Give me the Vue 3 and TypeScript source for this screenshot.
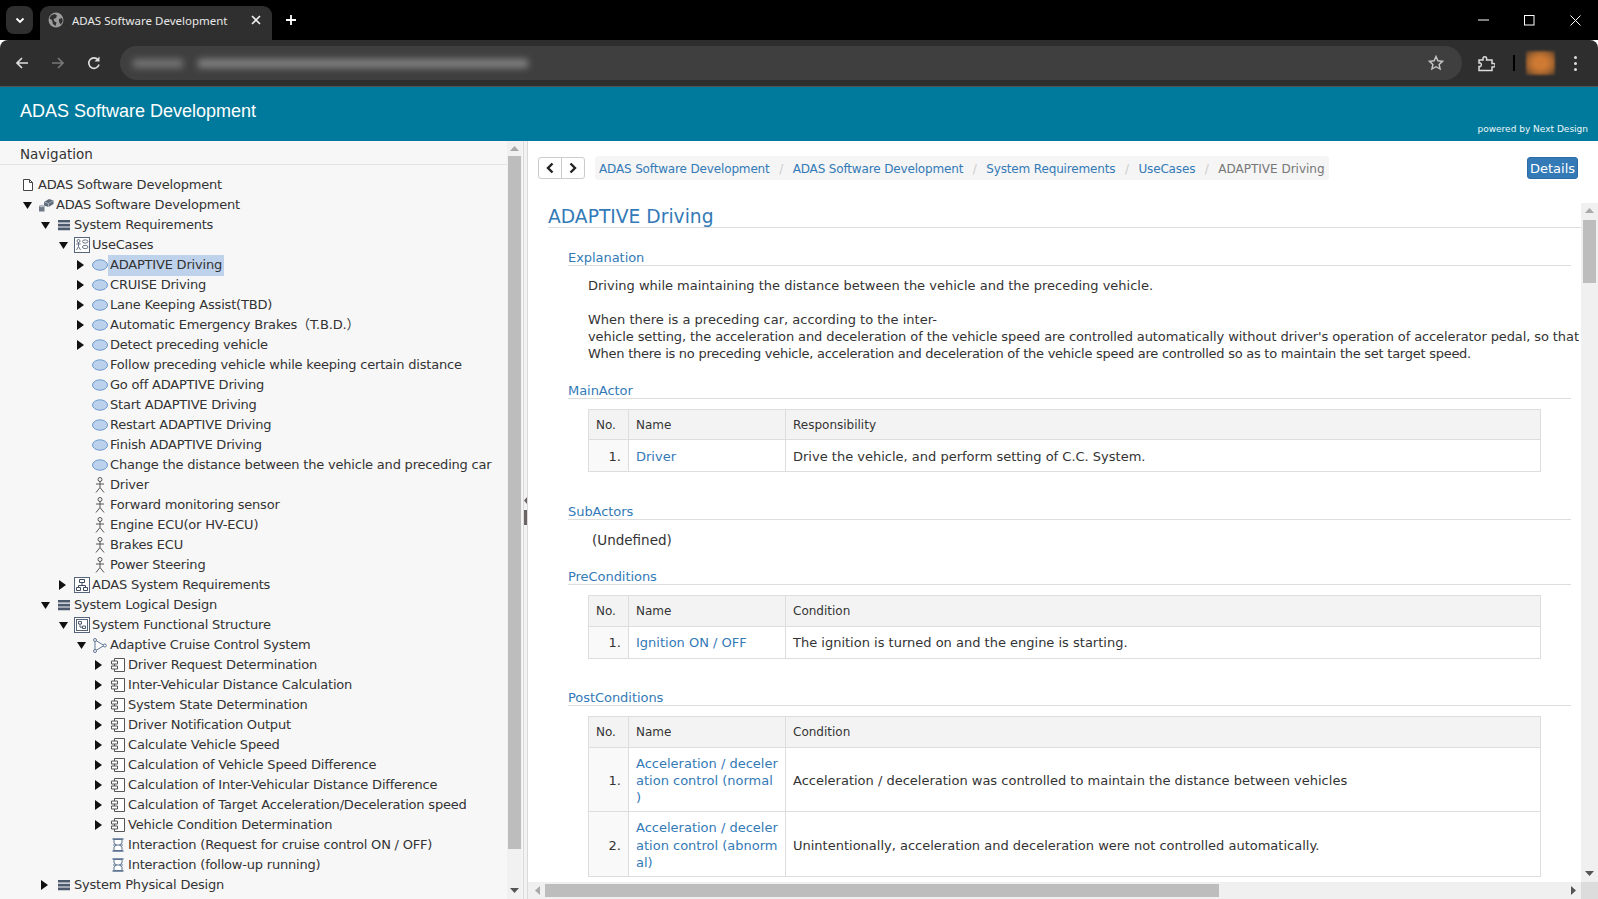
<script setup lang="ts">
type Row = { l: number; a: 'o' | 'c' | 'n'; i: string; t: string; s?: boolean }
const r = (l: number, a: 'o' | 'c' | 'n', i: string, t: string, s = false): Row => ({ l, a, i, t, s })
const rows: Row[] = [
  r(0, 'n', 'doc', 'ADAS Software Development'),
  r(1, 'o', 'model', 'ADAS Software Development'),
  r(2, 'o', 'list', 'System Requirements'),
  r(3, 'o', 'uc', 'UseCases'),
  r(4, 'c', 'ell', 'ADAPTIVE Driving', true),
  r(4, 'c', 'ell', 'CRUISE Driving'),
  r(4, 'c', 'ell', 'Lane Keeping Assist(TBD)'),
  r(4, 'c', 'ell', 'Automatic Emergency Brakes（T.B.D.）'),
  r(4, 'c', 'ell', 'Detect preceding vehicle'),
  r(4, 'n', 'ell', 'Follow preceding vehicle while keeping certain distance'),
  r(4, 'n', 'ell', 'Go off ADAPTIVE Driving'),
  r(4, 'n', 'ell', 'Start ADAPTIVE Driving'),
  r(4, 'n', 'ell', 'Restart ADAPTIVE Driving'),
  r(4, 'n', 'ell', 'Finish ADAPTIVE Driving'),
  r(4, 'n', 'ell', 'Change the distance between the vehicle and preceding car'),
  r(4, 'n', 'actor', 'Driver'),
  r(4, 'n', 'actor', 'Forward monitoring sensor'),
  r(4, 'n', 'actor', 'Engine ECU(or HV-ECU)'),
  r(4, 'n', 'actor', 'Brakes ECU'),
  r(4, 'n', 'actor', 'Power Steering'),
  r(3, 'c', 'req', 'ADAS System Requirements'),
  r(2, 'o', 'list', 'System Logical Design'),
  r(3, 'o', 'func', 'System Functional Structure'),
  r(4, 'o', 'sys', 'Adaptive Cruise Control System'),
  r(5, 'c', 'comp', 'Driver Request Determination'),
  r(5, 'c', 'comp', 'Inter-Vehicular Distance Calculation'),
  r(5, 'c', 'comp', 'System State Determination'),
  r(5, 'c', 'comp', 'Driver Notification Output'),
  r(5, 'c', 'comp', 'Calculate Vehicle Speed'),
  r(5, 'c', 'comp', 'Calculation of Vehicle Speed Difference'),
  r(5, 'c', 'comp', 'Calculation of Inter-Vehicular Distance Difference'),
  r(5, 'c', 'comp', 'Calculation of Target Acceleration/Deceleration speed'),
  r(5, 'c', 'comp', 'Vehicle Condition Determination'),
  r(5, 'n', 'inter', 'Interaction (Request for cruise control ON / OFF)'),
  r(5, 'n', 'inter', 'Interaction (follow-up running)'),
  r(2, 'c', 'list', 'System Physical Design'),
]
const pad = (x: Row) => (x.l === 0 ? 20 : 20 + 18 * (x.l - 1)) + 'px'
const crumbs = ['ADAS Software Development', 'ADAS Software Development', 'System Requirements', 'UseCases']
const urlBars = [{ w: 50, o: 0.4 }, { w: 330, o: 0.5 }]
</script>

<template>
  <div class="root">
    <div class="tabstrip">
      <div class="tabsearch">
        <svg width="12" height="12" viewBox="0 0 12 12"><path d="M2.500 4.500 6 8l3.500-3.500" fill="none" stroke="#fff" stroke-width="1.800" /></svg>
      </div>
      <div class="tab">
        <svg width="16" height="16" viewBox="0 0 16 16"><circle cx="8" cy="8" r="7.500" fill="#9a9a9a" /><path d="M3 3.500 6.500 2 9 3.500 8 6 5.500 7l1 2.500 2 1-1 3.500L5 12 4 8 1.500 6.500ZM11 7l3-1 .8 3-2 3.500L11 10Z" fill="#2f2f2f" /></svg>
        <span class="tabtitle">ADAS Software Development</span>
        <svg width="10" height="10" viewBox="0 0 10 10"><path d="M1 1l8 8M9 1 1 9" stroke="#eee" stroke-width="1.600" /></svg>
      </div>
      <svg class="plus" width="12" height="12" viewBox="0 0 12 12"><path d="M6 1v10M1 6h10" stroke="#fff" stroke-width="1.800" /></svg>
      <div class="spacer"></div>
      <div class="winctl">
        <svg width="11" height="11" viewBox="0 0 11 11"><path d="M0 5h11" stroke="#fff" stroke-width="1" /></svg>
        <svg width="11" height="11" viewBox="0 0 11 11"><rect x=".5" y=".5" width="9.500" height="9.500" fill="none" stroke="#fff" /></svg>
        <svg width="11" height="11" viewBox="0 0 11 11"><path d="M.5.5l10 10M10.500.5l-10 10" stroke="#fff" /></svg>
      </div>
    </div>
    <div class="toolbar">
      <svg class="nav1" width="16" height="16" viewBox="0 0 16 16"><path d="M14 8H3M8 3 3 8l5 5" fill="none" stroke="#dedede" stroke-width="1.700" /></svg>
      <svg class="nav2" width="16" height="16" viewBox="0 0 16 16"><path d="M2 8h11M8 3l5 5-5 5" fill="none" stroke="#777" stroke-width="1.700" /></svg>
      <svg class="nav3" width="16" height="16" viewBox="0 0 16 16"><path d="M13 9.500A5.200 5.200 0 1 1 12 4.800" fill="none" stroke="#dedede" stroke-width="1.600" /><path d="M13.500 1.500v5h-5z" fill="#dedede" /></svg>
      <div class="urlbar">
        <div class="blurs">
          <i v-for="(b, k) in urlBars" :key="k" :style="{ width: b.w + 'px', opacity: b.o }"></i>
        </div>
        <svg width="16" height="16" viewBox="0 0 16 16" class="star"><path d="M8 1.500l1.900 4.300 4.600.5-3.400 3.100 1 4.600L8 11.700l-4.100 2.300 1-4.600L1.500 6.300l4.600-.5Z" fill="none" stroke="#c8c8c8" stroke-width="1.400" /></svg>
      </div>
      <svg class="ext" width="17" height="17" viewBox="0 0 17 17"><path d="M1 5h4V3.500a1.800 1.800 0 0 1 3.600 0V5h5.400v3.500h1.500a1.700 1.700 0 0 1 0 3.400H14V15.500H1v-4h1.500a2.200 2.200 0 0 0 0-3.500H1Z" fill="none" stroke="#dcdcdc" stroke-width="1.500" /></svg>
      <div class="tdiv"></div>
      <div class="avatar"></div>
      <div class="kebab"><i></i><i></i><i></i></div>
    </div>

    <header class="apphead">
      <h1>ADAS Software Development</h1>
      <small>powered by Next Design</small>
    </header>

    <main class="body">
      <aside class="side">
        <div class="sidecol">
          <div class="navhead">Navigation</div>
          <div class="tree">
            <div v-for="(x, k) in rows" :key="k" class="row" :style="{ paddingLeft: pad(x) }">
              <span v-if="x.l > 0" class="arrow">
                <svg v-if="x.a === 'o'" width="9" height="7" viewBox="0 0 9 7"><path d="M0 0h9L4.500 7z" fill="#111" /></svg>
                <svg v-else-if="x.a === 'c'" width="7" height="10" viewBox="0 0 7 10"><path d="M0 0l7 5-7 5z" fill="#111" /></svg>
              </span>
              <span class="icon">
                <svg v-if="x.i === 'doc'" width="16" height="14" viewBox="0 0 16 14"><path d="M3.500 1.500h6l3 3v8h-9zM9.500 1.500v3h3" fill="#fff" stroke="#444" /></svg>
                <svg v-else-if="x.i === 'model'" width="16" height="14" viewBox="0 0 16 14"><path d="M6 4 11 1l4.500 1.500v3.500l-5 3-4.500-1.500z" fill="#5f6b7a" /><path d="M6 4l4.500 1.500 5-3M10.500 5.500V9" fill="none" stroke="#c0c6cd" stroke-width=".7" /><path d="M1 8h5.500v5.500H1z" fill="#6f7986" /><ellipse cx="3.750" cy="8" rx="2.750" ry="1.300" fill="#b4bac2" /></svg>
                <svg v-else-if="x.i === 'list'" width="16" height="14" viewBox="0 0 16 14"><path d="M2 2h12v2.600H2zM2 5.800h12v2.600H2zM2 9.600h12v2.600H2z" fill="#4d5a6e" /></svg>
                <svg v-else-if="x.i === 'uc'" width="16" height="16" viewBox="0 0 16 16"><rect x=".5" y=".5" width="15" height="15" fill="#fff" stroke="#566579" /><circle cx="4.500" cy="4" r="1.500" fill="none" stroke="#566579" stroke-width=".9" /><path d="M4.500 5.500v4M2.300 7h4.400M4.500 9.500 2.500 13M4.500 9.500l2 3.500" stroke="#566579" stroke-width=".9" fill="none" /><ellipse cx="11.200" cy="4.500" rx="2.800" ry="1.600" fill="none" stroke="#566579" stroke-width=".9" /><ellipse cx="11.200" cy="10" rx="2.800" ry="1.600" fill="none" stroke="#566579" stroke-width=".9" /></svg>
                <svg v-else-if="x.i === 'ell'" width="16" height="12" viewBox="0 0 16 12"><ellipse cx="8" cy="6" rx="7.500" ry="5.200" fill="#bcd2ec" stroke="#6f9bcf" /></svg>
                <svg v-else-if="x.i === 'actor'" width="10" height="16" viewBox="0 0 10 16"><circle cx="5" cy="2.500" r="2" fill="none" stroke="#555" /><path d="M5 4.500v6M1 7h8M5 10.500l-4 5M5 10.500l4 5" fill="none" stroke="#555" /></svg>
                <svg v-else-if="x.i === 'req'" width="16" height="16" viewBox="0 0 16 16"><rect x=".5" y=".5" width="15" height="15" fill="#fff" stroke="#566579" /><path d="M5.500 2.500h5v3h-5zM2.500 10.500h4v3h-4zM9.500 10.500h4v3h-4zM8 5.500v3M4.500 10.500v-2h7v2" fill="none" stroke="#3f4c5f" /></svg>
                <svg v-else-if="x.i === 'func'" width="16" height="16" viewBox="0 0 16 16"><rect x=".5" y=".5" width="15" height="15" fill="#fff" stroke="#566579" /><rect x="2.500" y="2.500" width="11" height="11" fill="none" stroke="#566579" /><path d="M4.500 4.500h3V7h-3zM8.500 9h3v2.500h-3zM6 7v3.200h2.500" fill="none" stroke="#3f4c5f" stroke-width=".9" /></svg>
                <svg v-else-if="x.i === 'sys'" class="sysicon" width="15" height="15" viewBox="0 0 15 15"><path d="M3 2 12 7.500 3 13z" fill="#fff" stroke="#5f7690" /><circle cx="3" cy="2" r="1.500" fill="#fff" stroke="#5f7690" /><circle cx="3" cy="13" r="1.500" fill="#fff" stroke="#5f7690" /><circle cx="12.800" cy="7.500" r="1.500" fill="#fff" stroke="#5f7690" /></svg>
                <svg v-else-if="x.i === 'comp'" width="14" height="14" viewBox="0 0 14 14"><path d="M3.500.5h10v13h-10z" fill="#fff" stroke="#555" /><path d="M.5 3h6v3h-6zM.5 8h6v3h-6z" fill="#fff" stroke="#555" /></svg>
                <svg v-else width="12" height="14" viewBox="0 0 12 14"><path d="M.5 1h11M.5 13h11" stroke="#5b7391" stroke-width="1.600" /><path d="M2 1.500h8v3.500L7.500 7 10 9v3.500H2V9l2.500-2L2 5z" fill="#fff" stroke="#5b7391" /><path d="M1 7h10" stroke="#5b7391" /></svg>
              </span>
              <span class="label" :class="{ sel: x.s }">{{ x.t }}</span>
            </div>
          </div>
        </div>
        <div class="vbar left">
          <svg width="9" height="5" viewBox="0 0 9 5"><path d="M4.500 0 9 5H0z" fill="#a9a9a9" /></svg>
          <div class="thumb"></div>
          <svg width="9" height="5" viewBox="0 0 9 5"><path d="M0 0h9L4.500 5z" fill="#555" /></svg>
        </div>
      </aside>

      <div class="split">
        <svg class="sp-a" width="3" height="7" viewBox="0 0 3 7"><path d="M3 0v7L0 3.500z" fill="#6b6464" /></svg>
        <div class="grip"></div>
      </div>

      <section class="main">
        <div class="topbar">
          <div class="btngrp">
            <button class="navbtn"><svg width="10" height="12" viewBox="0 0 10 12"><path d="M7.500 1.500 3 6l4.500 4.500" fill="none" stroke="#222" stroke-width="2.400" /></svg></button>
            <button class="navbtn"><svg width="10" height="12" viewBox="0 0 10 12"><path d="M2.500 1.500 7 6l-4.500 4.500" fill="none" stroke="#222" stroke-width="2.400" /></svg></button>
          </div>
          <nav class="crumb">
            <template v-for="c in crumbs" :key="c">
              <a>{{ c }}</a><span class="sep">/</span>
            </template>
            <span class="cur">ADAPTIVE Driving</span>
          </nav>
          <div class="spacer"></div>
          <button class="details">Details</button>
        </div>

        <div class="scrollarea">
          <div class="doc">
            <h2>ADAPTIVE Driving</h2>
            <h3 class="first">Explanation</h3>
            <div class="para">
              <p>Driving while maintaining the distance between the vehicle and the preceding vehicle.</p>
              <p class="gap">When there is a preceding car, according to the inter-</p>
              <p class="l3">vehicle setting, the acceleration and deceleration of the vehicle speed are controlled automatically without driver's operation of accelerator pedal, so that</p>
              <p class="l4">When there is no preceding vehicle, acceleration and deceleration of the vehicle speed are controlled so as to maintain the set target speed.</p>
            </div>

            <h3 class="mainactor">MainActor</h3>
            <table>
              <thead><tr><th>No.</th><th>Name</th><th>Responsibility</th></tr></thead>
              <tbody><tr><td class="no">1.</td><td><a>Driver</a></td><td>Drive the vehicle, and perform setting of C.C. System.</td></tr></tbody>
            </table>

            <h3 class="subactors">SubActors</h3>
            <p class="undef">(Undefined)</p>

            <h3 class="pre">PreConditions</h3>
            <table>
              <thead><tr><th>No.</th><th>Name</th><th>Condition</th></tr></thead>
              <tbody><tr><td class="no">1.</td><td><a>Ignition ON / OFF</a></td><td>The ignition is turned on and the engine is starting.</td></tr></tbody>
            </table>

            <h3 class="post">PostConditions</h3>
            <table class="tall">
              <thead><tr><th>No.</th><th>Name</th><th>Condition</th></tr></thead>
              <tbody>
                <tr><td class="no">1.</td><td><a>Acceleration / deceler<br />ation control (normal<br />)</a></td><td>Acceleration / deceleration was controlled to maintain the distance between vehicles</td></tr>
                <tr><td class="no">2.</td><td><a>Acceleration / deceler<br />ation control (abnorm<br />al)</a></td><td>Unintentionally, acceleration and deceleration were not controlled automatically.</td></tr>
              </tbody>
            </table>
          </div>
          <div class="vbar right">
            <svg width="9" height="5" viewBox="0 0 9 5"><path d="M4.500 0 9 5H0z" fill="#a9a9a9" /></svg>
            <div class="thumb"></div>
            <div class="spacer"></div>
            <svg width="9" height="5" viewBox="0 0 9 5"><path d="M0 0h9L4.500 5z" fill="#555" /></svg>
          </div>
        </div>
        <div class="hbar">
          <svg width="5" height="9" viewBox="0 0 5 9"><path d="M5 0v9L0 4.500z" fill="#a9a9a9" /></svg>
          <div class="hthumb"></div>
          <div class="spacer"></div>
          <svg width="5" height="9" viewBox="0 0 5 9"><path d="M0 0l5 4.500L0 9z" fill="#555" /></svg>
          <div class="corner"></div>
        </div>
      </section>
    </main>
  </div>
</template>

<style>
html, body { margin: 0; overflow: hidden; }
</style>

<style scoped>
.root { width: 1598px; height: 899px; display: flex; flex-direction: column; overflow: hidden; font-family: "DejaVu Sans", "Noto Sans CJK JP", sans-serif; font-size: 13px; color: #333; background: #fff; }
.spacer { flex: 1; }
.tabstrip { height: 40px; background: #000; display: flex; align-items: flex-start; flex: none; }
.tabsearch { width: 27px; height: 28px; margin: 6px 0 0 6px; background: #2f2f2f; border-radius: 8px; display: flex; align-items: center; justify-content: center; }
.tab { width: 232px; height: 34px; margin: 6px 0 0 7px; background: #2f2f2f; border-radius: 9px 9px 0 0; display: flex; align-items: center; box-sizing: border-box; padding: 0 0 6px 8px; color: #e8e8e8; font-family: "Noto Sans", "Open Sans", sans-serif; font-size: 11.500px; }
.tabtitle { margin-left: 8px; width: 179px; white-space: nowrap; flex: none; }
.plus { margin: 14px 0 0 13px; }
.winctl { display: flex; gap: 35px; margin: 15px 17px 0 0; }
.toolbar { height: 47px; box-sizing: border-box; background: #2e2e2e; border-bottom: 1px solid #555; border-radius: 8px 8px 0 0; display: flex; align-items: center; flex: none; }
.nav1 { margin-left: 14px; }
.nav2 { margin-left: 20px; }
.nav3 { margin-left: 20px; }
.urlbar { width: 1342px; height: 34px; margin-left: 18px; background: #3f3f3f; border-radius: 17px; display: flex; align-items: center; box-sizing: border-box; padding: 0 18px 0 12px; }
.blurs { display: flex; gap: 15px; flex: 1; filter: blur(3.500px); padding-left: 1px; }
.blurs i { height: 9px; background: #c4c4c4; display: block; }
.star { flex: none; }
.ext { margin-left: 16px; }
.tdiv { width: 2px; height: 16px; background: #000; margin-left: 18px; }
.avatar { width: 29px; height: 24px; margin-left: 11px; background: radial-gradient(ellipse at 50% 50%, #cf7a33 0 30%, #a9672f 60%, #4a3a2c 100%); filter: blur(1px); }
.kebab { display: flex; flex-direction: column; gap: 3px; margin-left: 19px; }
.kebab i { width: 3px; height: 3px; background: #ddd; border-radius: 50%; display: block; }
.apphead { height: 54px; flex: none; background: #007a9c; color: #fff; position: relative; }
.apphead h1 { margin: 0; padding: 13px 0 0 20px; font: 400 18px/22px "Liberation Sans", Arial, sans-serif; }
.apphead small { position: absolute; right: 10px; bottom: 6px; font-size: 9px; line-height: 12px; color: #eef7fa; }
.body { flex: 1; min-height: 0; display: flex; }
.side { width: 523px; flex: none; display: flex; background: #f7f7f7; overflow: hidden; }
.sidecol { flex: 1; min-width: 0; overflow: hidden; }
.navhead { height: 23px; line-height: 26px; padding-left: 20px; border-bottom: 1px solid #e2e2e2; font-size: 13.500px; }
.tree { padding-top: 10px; letter-spacing: -0.2px; }
.row { height: 20px; display: flex; align-items: center; white-space: nowrap; }
.arrow { width: 18px; flex: none; display: flex; align-items: center; padding-left: 3px; box-sizing: border-box; }
.icon { width: 16px; flex: none; display: flex; align-items: center; justify-content: center; }
.sysicon { margin-left: -2px; }
.label { padding: 0 2px; height: 21px; line-height: 19px; }
.label.sel { background: #bfd2ec; }
.vbar { width: 15px; flex: none; display: flex; flex-direction: column; align-items: center; background: #f1f1f1; }
.vbar.left { margin-right: 1px; padding-top: 5px; box-sizing: border-box; }
.vbar.left > svg:last-child { margin-top: 39px; }
.vbar.left .thumb { width: 13px; height: 693px; margin-top: 5px; background: #bdbdbd; }
.split { width: 5px; flex: none; background: #f3f3f3; border-left: 1px solid #d9d9d9; border-right: 1px solid #d9d9d9; box-sizing: border-box; display: flex; flex-direction: column; align-items: center; }
.sp-a { margin-top: 356px; }
.grip { width: 3px; height: 15px; background: #6b6464; margin-top: 6px; flex: none; }
.main { flex: 1; min-width: 0; display: flex; flex-direction: column; background: #fff; }
.topbar { height: 62px; flex: none; box-sizing: border-box; padding: 15px 20px 0 10px; display: flex; align-items: flex-start; }
.btngrp { display: flex; margin-top: 1px; }
.navbtn { width: 24px; height: 22px; padding: 0; background: #fff; border: 1px solid #ccc; display: flex; align-items: center; justify-content: center; }
.navbtn:first-child { border-radius: 3px 0 0 3px; }
.navbtn:last-child { margin-left: -1px; border-radius: 0 3px 3px 0; }
.crumb { height: 24px; box-sizing: border-box; margin-left: 10px; padding: 2px 4px 0; background: #f5f5f5; border-radius: 4px; display: flex; align-items: center; white-space: nowrap; font-size: 12px; letter-spacing: -0.15px; }
.crumb a { color: #337ab7; }
.sep { color: #ccc; width: 23px; text-align: center; }
.cur { color: #777; letter-spacing: 0; }
.details { margin-top: 1px; width: 51px; height: 22px; padding: 1px 0 0; background: #337ab7; border: 1px solid #2e6da4; border-radius: 3px; color: #fff; font: 13px/20px "DejaVu Sans", sans-serif; }
.scrollarea { flex: 1; min-height: 0; display: flex; }
.doc { flex: 1; min-width: 0; overflow: hidden; padding: 0 0 0 20px; }
.vbar.right { width: 17px; padding: 5px 0 6px; box-sizing: border-box; background: #f0f0f0; }
.vbar.right .thumb { width: 13px; height: 63px; margin-top: 7px; background: #bdbdbd; }
h2 { margin: 0; height: 24px; line-height: 27px; font-size: 18.700px; font-weight: 400; color: #337ab7; border-bottom: 1px solid #ddd; }
h3 { margin: 0 10px 0 20px; height: 15px; line-height: 18px; font-size: 13px; letter-spacing: -0.05px; font-weight: 400; color: #337ab7; border-bottom: 1px solid #ddd; padding-bottom: 1px; }
h3.first { margin-top: 21px; }
.para { margin: 0 0 0 40px; padding-top: 11px; line-height: 17px; white-space: nowrap; overflow: hidden; }
.para p { margin: 0; }
.para .gap { margin-top: 17px; }
.para .l3 { letter-spacing: -0.1px; }
.para .l4 { letter-spacing: -0.26px; }
h3.mainactor { margin-top: 20px; }
h3.subactors { margin-top: 31px; }
h3.pre { margin-top: 19px; }
h3.post { margin-top: 30px; }
.undef { margin: 12px 0 0 44px; line-height: 17px; font-size: 13.500px; }
table { table-layout: fixed; width: 953px; margin: 10px 0 0 40px; border-collapse: collapse; line-height: 17.300px; }
th:nth-child(1), td:nth-child(1) { width: 40px; }
th:nth-child(2), td:nth-child(2) { width: 157px; }
th, td { box-sizing: border-box; border: 1px solid #ddd; padding: 7px 7px 5px; vertical-align: middle; text-align: left; font-weight: 400; height: 32px; }
th { background: #f3f3f3; height: 30px; font-size: 12px; }
.tall th { height: 31px; }
td.no { text-align: right; background: #f9f9f9; }
td a { color: #337ab7; }
.hbar { height: 17px; flex: none; background: #f0f0f0; display: flex; align-items: center; padding-left: 7px; }
.hthumb { width: 674px; height: 13px; margin-left: 5px; background: #bdbdbd; }
.corner { width: 17px; height: 17px; background: #dcdcdc; margin-left: 5px; }
</style>
